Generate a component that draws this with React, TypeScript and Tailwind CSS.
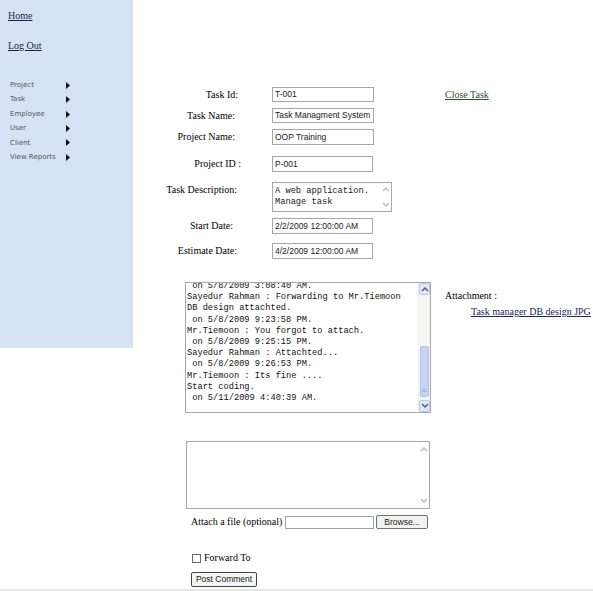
import React from 'react';

const serif = "font-['Liberation_Serif','Times_New_Roman',serif]";
const sans = "font-['Liberation_Sans',Arial,sans-serif]";
const mono = "font-['Liberation_Mono','Courier_New',monospace]";
const verdana = "font-['DejaVu_Sans',Verdana,sans-serif]";

const menuItems = ['Project', 'Task', 'Employee', 'User', 'Client', 'View Reports'];

const comments = [
  ' on 5/8/2009 3:08:40 AM.',
  'Sayedur Rahman : Forwarding to Mr.Tiemoon',
  'DB design attachted.',
  ' on 5/8/2009 9:23:58 PM.',
  'Mr.Tiemoon : You forgot to attach.',
  ' on 5/8/2009 9:25:15 PM.',
  'Sayedur Rahman : Attachted...',
  ' on 5/8/2009 9:26:53 PM.',
  'Mr.Tiemoon : Its fine ....',
  'Start coding.',
  ' on 5/11/2009 4:40:39 AM.',
];

// small black menu arrow
const MenuArrow = () => (
  <svg width="4" height="7" viewBox="0 0 4 7">
    <polygon points="0,0 4,3.5 0,7" fill="#111" />
  </svg>
);

// scrollbar arrow button, xp-ish
const ScrollArrow = ({ dir, active }: { dir: 'up' | 'down'; active?: boolean }) => (
  <div
    className={
      active
        ? 'h-[12px] w-full flex items-center justify-center bg-[#dfe7f7] border border-[#bccbe8] rounded-[2px]'
        : 'h-[12px] w-full flex items-center justify-center'
    }
  >
    <svg width="8" height="6" viewBox="0 0 8 6">
      <polyline
        points={dir === 'up' ? '1,5 4,2 7,5' : '1,1 4,4 7,1'}
        fill="none"
        stroke={active ? '#4d6185' : '#b4bccb'}
        strokeWidth="1.5"
      />
    </svg>
  </div>
);

const TextBox = ({ value, className }: { value: string; className: string }) => (
  <div
    className={`${className} h-full border border-[#a4a8ae] bg-white pl-[2px] flex items-center text-[8.5px] text-[#1a1a1a] ${sans} whitespace-nowrap overflow-hidden`}
  >
    {value}
  </div>
);

const Label = ({ text, className }: { text: string; className: string }) => (
  <div className={`w-[106px] shrink-0 text-right text-[10px] leading-[12px] text-black ${className}`}>{text}</div>
);

export default function App() {
  return (
    <div className={`w-[593px] h-[591px] bg-white flex flex-col overflow-hidden ${serif}`}>
      <div className="flex flex-1 items-start">
        {/* Side menu */}
        <div className="w-[133px] h-[348px] shrink-0 bg-[#d6e3f5] pl-[8px] pt-[10px]">
          <a className="block text-[10px] leading-[12px] underline text-[#1d1d45]">Home</a>
          <a className="block mt-[18px] text-[10px] leading-[12px] underline text-[#1d1d45]">Log Out</a>
          <ul className={`mt-[26px] ml-[2px] ${verdana} text-[7px] leading-[14.4px] text-[#555]`}>
            {menuItems.map((item) => (
              <li key={item} className="flex items-center">
                <span className="w-[56px]">{item}</span>
                <MenuArrow />
              </li>
            ))}
          </ul>
        </div>

        {/* Task details */}
        <div className="flex-1 flex flex-col pl-[33px] pt-[87px]">
          <div className="flex items-center h-[15px]">
            <Label text="Task Id:" className="pr-[34px]" />
            <TextBox value="T-001" className="w-[102px]" />
            <a className="ml-[71px] text-[10px] underline text-[#2f4f2f]">Close Task</a>
          </div>
          <div className="flex items-center h-[15px] mt-[6px]">
            <Label text="Task Name:" className="pr-[37px]" />
            <TextBox value="Task Managment System" className="w-[102px]" />
          </div>
          <div className="flex items-center h-[16px] mt-[6px]">
            <Label text="Project Name:" className="pr-[37px]" />
            <TextBox value="OOP Training" className="w-[102px]" />
          </div>
          <div className="flex items-center h-[16px] mt-[11px]">
            <Label text="Project ID :" className="pr-[31px]" />
            <TextBox value="P-001" className="w-[101px]" />
          </div>
          <div className="flex items-start h-[30px] mt-[10px]">
            <Label text="Task Description:" className="pr-[35px] pt-[2px]" />
            <div className="w-[120px] h-full border border-[#a4a8ae] bg-white flex">
              <div className={`flex-1 pl-[2px] pt-[3px] ${mono} text-[8.7px] leading-[11px] text-[#1a1a1a] whitespace-pre`}>
                {'A web application.\nManage task'}
              </div>
              <div className="w-[11px] flex flex-col justify-between">
                <ScrollArrow dir="up" />
                <ScrollArrow dir="down" />
              </div>
            </div>
          </div>
          <div className="flex items-center h-[16px] mt-[6px]">
            <Label text="Start Date:" className="pr-[39px]" />
            <TextBox value="2/2/2009 12:00:00 AM" className="w-[101px]" />
          </div>
          <div className="flex items-center h-[16px] mt-[9px]">
            <Label text="Estimate Date:" className="pr-[35px]" />
            <TextBox value="4/2/2009 12:00:00 AM" className="w-[101px]" />
          </div>

          {/* Comment history + attachment */}
          <div className="flex items-start mt-[23px] ml-[19px]">
            <div className="w-[246px] h-[131px] border border-[#a4a8ae] bg-white flex overflow-hidden">
              <div className={`flex-1 pl-[1px] overflow-hidden ${mono} text-[8.7px] leading-[11.2px] text-[#111] whitespace-pre`}>
                <div className="-mt-[2px]">
                  {comments.map((line, i) => (
                    <div key={i}>{line}</div>
                  ))}
                </div>
              </div>
              <div className="w-[12px] flex flex-col bg-[#f6f6f3] border-l border-[#eeeeee]">
                <ScrollArrow dir="up" active />
                <div className="flex-1 flex flex-col justify-end pb-[3px]">
                  <div className="h-[51px] mx-[1px] bg-[#c4d3f6] border border-[#b0c2ea] rounded-[2px] flex items-end justify-center pb-[4px]">
                    <div className="w-[5px] h-[3px] border-y border-[#9fb2dd]" />
                  </div>
                </div>
                <ScrollArrow dir="down" active />
              </div>
            </div>
            <div className="ml-[14px] pt-[8px] text-[10px] leading-[12px] text-black">
              <div>Attachment :</div>
              <a className="block mt-[4px] ml-[26px] underline text-[#23235e] whitespace-nowrap">
                Task manager DB design JPG
              </a>
            </div>
          </div>

          {/* New comment */}
          <div className="mt-[28px] ml-[20px] w-[244px] h-[68px] border border-[#a4a8ae] bg-white flex">
            <div className="flex-1" />
            <div className="w-[11px] flex flex-col justify-between py-[1px]">
              <ScrollArrow dir="up" />
              <ScrollArrow dir="down" />
            </div>
          </div>

          <div className="flex items-center h-[14px] mt-[6px] ml-[25px]">
            <span className="text-[10px] leading-[12px] text-black w-[94px]">Attach a file (optional)</span>
            <div className="w-[89px] h-[13px] border border-[#9fa3a8] bg-white" />
            <button
              className={`ml-[2px] w-[52px] h-[14px] border border-[#6d7178] rounded-[2px] bg-[#f3f3f0] text-[8.5px] leading-[12px] text-[#222] ${sans}`}
            >
              Browse...
            </button>
          </div>

          <div className="flex items-center h-[12px] mt-[23px] ml-[26px]">
            <div className="w-[9px] h-[9px] border border-[#6a6a6a] bg-white" />
            <span className="ml-[3px] text-[10px] leading-[12px] text-black">Forward To</span>
          </div>

          <button
            className={`self-start mt-[8px] ml-[25px] w-[66px] h-[15px] border border-[#38465a] rounded-[2px] bg-[#f4f4f1] text-[8.5px] leading-[13px] text-[#1a1a1a] ${sans}`}
          >
            Post Comment
          </button>
        </div>
      </div>
      <div className="h-[2px] bg-[#e6e6e6]" />
    </div>
  );
}
